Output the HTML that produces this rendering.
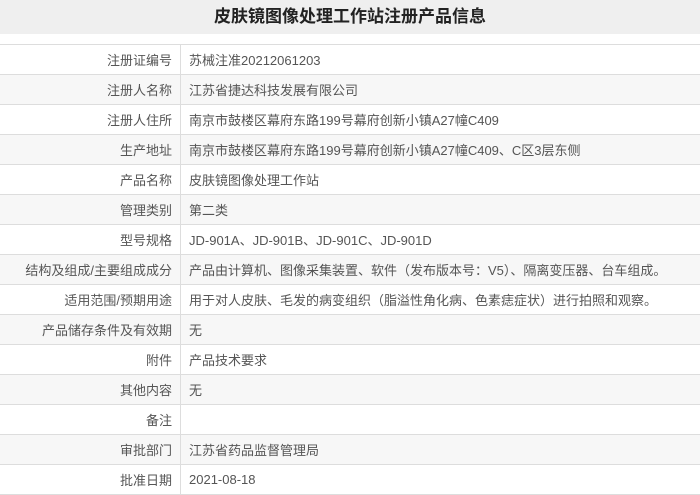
<!DOCTYPE html>
<html><head><meta charset="utf-8"><style>
body{margin:0;width:700px;height:495px;overflow:hidden;background:#fff;font-family:"Liberation Sans","Noto Sans CJK SC",sans-serif;color:#555;}
.t{height:34px;background:#efefef;text-align:center;font-size:17px;font-weight:bold;color:#222;line-height:34px;}
table{position:absolute;top:44px;left:0;width:700px;border-collapse:collapse;font-size:13px;}
td{height:29px;border-top:1px solid #ddd;border-bottom:1px solid #ddd;padding:0;}
td.l{width:172px;text-align:right;padding-right:8px;border-right:1px solid #ddd;}
td.v{padding-left:8px;}
tr:nth-child(even){background:#f7f7f7;}
</style></head><body>
<div class="t">皮肤镜图像处理工作站注册产品信息</div>
<table>
<tr><td class="l">注册证编号</td><td class="v">苏械注准20212061203</td></tr>
<tr><td class="l">注册人名称</td><td class="v">江苏省捷达科技发展有限公司</td></tr>
<tr><td class="l">注册人住所</td><td class="v">南京市鼓楼区幕府东路199号幕府创新小镇A27幢C409</td></tr>
<tr><td class="l">生产地址</td><td class="v">南京市鼓楼区幕府东路199号幕府创新小镇A27幢C409、C区3层东侧</td></tr>
<tr><td class="l">产品名称</td><td class="v">皮肤镜图像处理工作站</td></tr>
<tr><td class="l">管理类别</td><td class="v">第二类</td></tr>
<tr><td class="l">型号规格</td><td class="v">JD-901A、JD-901B、JD-901C、JD-901D</td></tr>
<tr><td class="l">结构及组成/主要组成成分</td><td class="v">产品由计算机、图像采集装置、软件（发布版本号：V5）、隔离变压器、台车组成。</td></tr>
<tr><td class="l">适用范围/预期用途</td><td class="v">用于对人皮肤、毛发的病变组织（脂溢性角化病、色素痣症状）进行拍照和观察。</td></tr>
<tr><td class="l">产品储存条件及有效期</td><td class="v">无</td></tr>
<tr><td class="l">附件</td><td class="v">产品技术要求</td></tr>
<tr><td class="l">其他内容</td><td class="v">无</td></tr>
<tr><td class="l">备注</td><td class="v"></td></tr>
<tr><td class="l">审批部门</td><td class="v">江苏省药品监督管理局</td></tr>
<tr><td class="l">批准日期</td><td class="v">2021-08-18</td></tr>
</table>
</body></html>
